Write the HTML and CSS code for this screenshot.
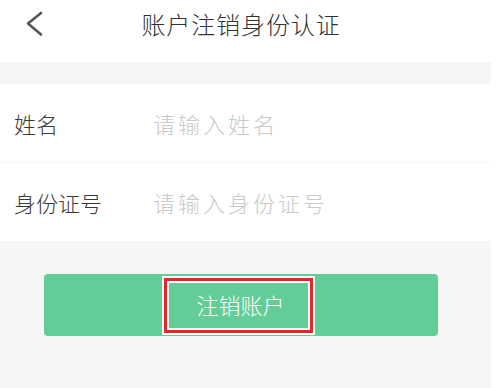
FILE: index.html
```html
<!DOCTYPE html>
<html lang="zh-CN">
<head>
<meta charset="utf-8">
<link rel="stylesheet" href="styles.css">
</head>
<body>
<div class="page">
  <header class="header">
    <div class="back">
      <svg width="18" height="26" viewBox="0 0 18 26"><polyline points="15,2 2,12.5 15,23.5" fill="none" stroke="#555" stroke-width="2.6" stroke-linecap="round" stroke-linejoin="round"/></svg>
    </div>
    <h1 class="title">账户注销身份认证</h1>
    <div></div>
  </header>
  <div class="gap"></div>
  <div class="form">
    <div class="row">
      <span class="label">姓名</span>
      <span class="placeholder">请输入姓名</span>
    </div>
    <div class="row">
      <span class="label">身份证号</span>
      <span class="placeholder">请输入身份证号</span>
    </div>
  </div>
  <div class="actions">
    <button class="btn"><span class="mark">注销账户</span></button>
  </div>
</div>
</body>
</html>
```
FILE: styles.css
```css
html, body {
  margin: 0;
  padding: 0;
  background: #ffffff;
}
body {
  font-family: "Noto Sans CJK SC", "Noto Sans", sans-serif;
  font-weight: 300;
}
.page {
  width: 491px;
  height: 388px;
  background: #f6f6f6;
}
.header {
  box-sizing: border-box;
  height: 62px;
  padding: 0 9px 14px 0;
  background: #ffffff;
  display: grid;
  grid-template-columns: 1fr auto 1fr;
  align-items: center;
}
.back {
  padding-left: 26px;
  display: flex;
  align-items: center;
}
.title {
  margin: 0;
  font-size: 24px;
  font-weight: 300;
  color: #333333;
  line-height: 1;
  letter-spacing: 0.9px;
}
.gap {
  height: 22px;
}
.form {
  background: #ffffff;
  display: flex;
  flex-direction: column;
}
.row {
  height: 78px;
  display: flex;
  align-items: center;
  padding-left: 14px;
  font-size: 22px;
  line-height: 1;
}
.row + .row {
  border-top: 1px solid #f7f7f7;
}
.label {
  width: 139px;
  color: #3a3a3a;
}
.placeholder {
  color: #c9c9c9;
  letter-spacing: 3px;
}
.actions {
  padding-top: 33px;
  padding-left: 44px;
}
.btn {
  width: 394px;
  height: 62px;
  border: none;
  border-radius: 4px;
  background: #63cd98;
  display: flex;
  align-items: center;
  justify-content: center;
  padding: 0 5px 0 0;
  font-family: inherit;
}
.mark {
  box-sizing: border-box;
  width: 151px;
  height: 57px;
  display: flex;
  align-items: center;
  justify-content: center;
  border: 4px solid #e3262c;
  outline: 2px solid #ffffff;
  outline-offset: -1px;
  box-shadow: inset 0 0 0 2px #ffffff;
  color: #ffffff;
  font-size: 22px;
  font-weight: 300;
  line-height: 1;
  padding: 0 0 3px 4px;
}
```
